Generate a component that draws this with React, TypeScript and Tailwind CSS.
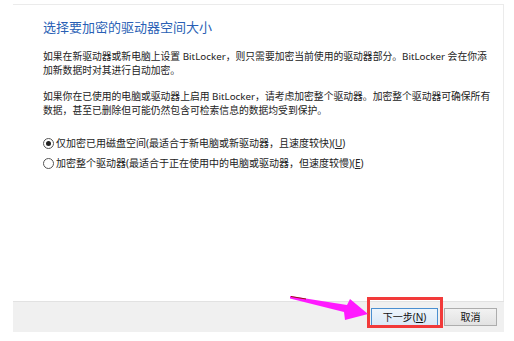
export default function App() {
  return (
    <div
      className="relative w-[514px] h-[341px] bg-white overflow-hidden"
      style={{ fontFamily: '"Noto Sans", "Noto Sans CJK SC", sans-serif' }}
    >
      <div className="ml-[13px] pt-[4px] w-[491px]">
        <div className="h-[297px] border-t border-r border-[#ebebeb] bg-white pl-[30px] pt-[13px]">
          <h1 className="text-[13px] leading-[18px] text-[#2a5fb5] whitespace-nowrap">
            选择要加密的驱动器空间大小
          </h1>
          <p className="mt-[14px] text-[9.8px] leading-[14px] text-[#222] whitespace-nowrap">
            如果在新驱动器或新电脑上设置 BitLocker，则只需要加密当前使用的驱动器部分。BitLocker 会在你添
            <br />
            加新数据时对其进行自动加密。
          </p>
          <p className="mt-[12px] text-[9.8px] leading-[14px] text-[#222] whitespace-nowrap">
            如果你在已使用的电脑或驱动器上启用 BitLocker，请考虑加密整个驱动器。加密整个驱动器可确保所有
            <br />
            数据，甚至已删除但可能仍然包含可检索信息的数据均受到保护。
          </p>
          <div className="mt-[15px] flex flex-col">
            <label className="flex items-center h-[20px] text-[10px] text-[#222] whitespace-nowrap">
              <span className="w-[11px] h-[11px] rounded-full border border-[#555] bg-white flex items-center justify-center mr-[2px]">
                <span className="w-[5px] h-[5px] rounded-full bg-[#222]" />
              </span>
              仅加密已用磁盘空间(最适合于新电脑或新驱动器，且速度较快)(<span className="underline">U</span>)
            </label>
            <label className="flex items-center h-[20px] text-[10px] text-[#222] whitespace-nowrap">
              <span className="w-[11px] h-[11px] rounded-full border border-[#555] bg-white mr-[2px]" />
              加密整个驱动器(最适合于正在使用中的电脑或驱动器，但速度较慢)(<span className="underline">E</span>)
            </label>
          </div>
        </div>
        <div className="h-[31px] border-t border-[#e2e2e2] bg-[#f0f0f0] flex items-center justify-end gap-[6px] pr-[7px]">
          <button className="w-[67px] h-[18px] border border-[#4a8fd0] bg-gradient-to-b from-[#eef5fc] to-[#dbe9f7] text-[10px] leading-none text-[#111]">
            下一步(<span className="underline">N</span>)
          </button>
          <button className="w-[53px] h-[18px] border border-[#adadad] bg-gradient-to-b from-[#f2f2f2] to-[#e2e2e2] text-[10px] leading-none text-[#111]">
            取消
          </button>
        </div>
      </div>

      {/* highlight box and arrow drawn over the footer */}
      <div className="absolute left-[367px] top-[297px] w-[76px] h-[31px] border-[3px] border-[#f23a3a]" />
      <svg className="absolute left-0 top-0" width="514" height="341" viewBox="0 0 514 341">
        <polygon
          points="290,296 347,305 350,299 368,314 345,320 344,312 290,298.5"
          fill="#ff1aff"
        />
        <line x1="291" y1="296.5" x2="306" y2="299" stroke="#a01010" strokeWidth="1" />
      </svg>
    </div>
  );
}
